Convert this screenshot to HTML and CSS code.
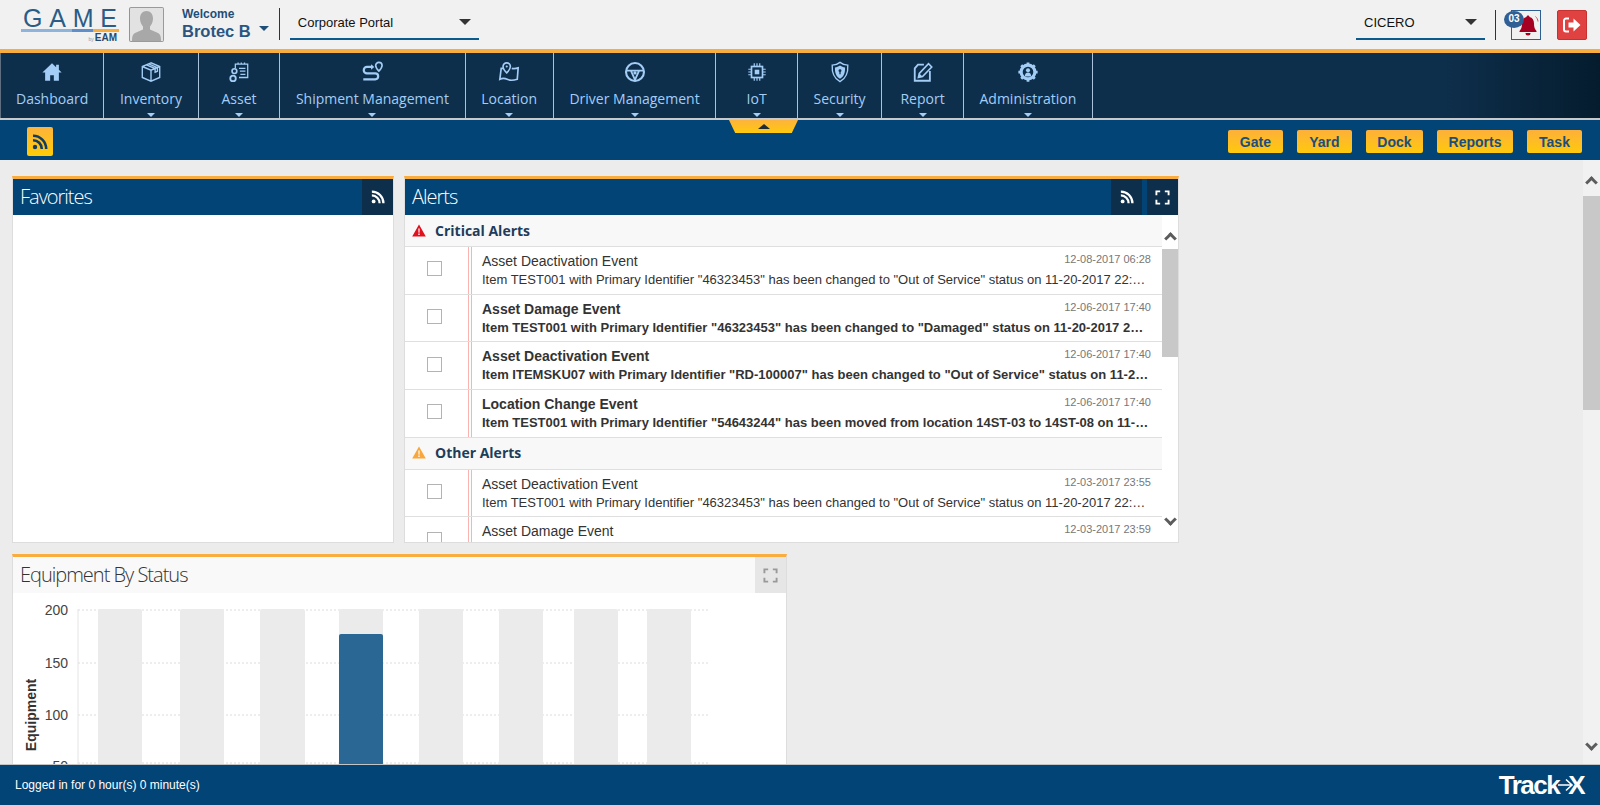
FILE: index.html
```html
<!DOCTYPE html>
<html lang="en">
<head>
  <meta charset="UTF-8">
  <title>GAME EAM - Corporate Portal</title>
  <link rel="stylesheet" href="styles.css">
</head>
<body>

<svg class="defs" width="0" height="0">
  <symbol id="i-rss" viewBox="0 0 16 16">
    <circle cx="3" cy="13" r="2.2" fill="currentColor"/>
    <path d="M1 6.2a8.8 8.8 0 0 1 8.8 8.8M1 1.8A13.2 13.2 0 0 1 14.2 15" fill="none" stroke="currentColor" stroke-width="2.6"/>
  </symbol>
  <symbol id="i-expand" viewBox="0 0 16 16">
    <path d="M1.5 5.5v-4h4M10.500 1.500h4v4M14.500 10.500v4h-4M5.500 14.500h-4v-4" fill="none" stroke="currentColor" stroke-width="2"/>
  </symbol>
  <symbol id="i-warn" viewBox="0 0 14 13">
    <path d="M7 .5 13.800 12.500H.2Z" fill="currentColor"/>
    <path d="M6.300 4.500h1.400l-.2 4.300h-1zM6.300 9.600h1.400v1.400H6.300z" fill="#fff"/>
  </symbol>
</svg>

<header class="topbar">
  <div class="logo">
    <span class="logo-name">GAME</span>
    <span class="logo-line"></span>
    <span class="logo-sub"><small>by</small>EAM</span>
  </div>
  <div class="avatar">
    <svg width="33" height="33" viewBox="0 0 33 33"><path d="M16.500 3c4 0 6.500 3 6.500 7.500 0 3.500-1.500 6.500-3 8v3l8 3.500c2 1 3 3 3 8H2c0-5 1-7 3-8l8-3.500v-3c-1.500-1.500-3-4.500-3-8C10 6 12.500 3 16.500 3Z" fill="#a8a8a8"/></svg>
  </div>
  <div class="welcome">
    <span class="welcome-label">Welcome</span>
    <span class="welcome-name">Brotec B</span>
  </div>
  <span class="caret caret-blue"></span>
  <span class="vline"></span>
  <div class="select select-portal">Corporate Portal<span class="caret caret-dark"></span></div>
  <div class="topbar-right">
    <div class="select select-site">CICERO<span class="caret caret-dark"></span></div>
    <span class="vline vline-right"></span>
    <div class="bell">
      <span class="badge">03</span>
      <svg width="24" height="24" viewBox="0 0 24 24"><path d="M12 2.500c.9 0 1.500.6 1.500 1.400 3 .7 4.500 3.300 4.500 6.500 0 4 .8 5.500 2.500 7.600v1H3.500v-1C5.200 15.900 6 14.400 6 10.400c0-3.200 1.500-5.800 4.500-6.500 0-.8.600-1.400 1.500-1.400ZM9.500 20h5a2.500 2.500 0 0 1-5 0Z" fill="#a50021"/><path d="M19.500 3.500c1.500 1.300 2.300 3 2.500 5" fill="none" stroke="#d9534f" stroke-width="1"/></svg>
    </div>
    <button class="logout">
      <svg width="20" height="18" viewBox="0 0 20 18"><path d="M7 2.500H4a2 2 0 0 0-2 2v9a2 2 0 0 0 2 2h3" fill="none" stroke="#fff" stroke-width="2"/><path d="M6.500 6.500h5V2.500L18.500 9l-7 6.500v-4h-5Z" fill="#fff"/></svg>
    </button>
  </div>
</header>

<nav class="mainnav">
  <a class="nav-item nav-first">
    <svg class="nav-icon" viewBox="0 0 24 24"><path d="M12 2.500 1.500 12.500h3v9h5.500v-6h4v6h5.500v-9h3l-3-3V4h-3v2.700Z" fill="currentColor"/></svg>
    <span>Dashboard</span>
  </a>
  <a class="nav-item has-sub">
    <svg class="nav-icon" viewBox="0 0 24 24"><path d="M12 2 2.500 6v12l9.500 4 9.500-4V6ZM2.500 6l9.500 4 9.500-4M12 10v12M7 4.200l9.500 4v4l2.500-1V7.200L9.500 3.200" fill="none" stroke="currentColor" stroke-width="1.500"/></svg>
    <span>Inventory</span>
  </a>
  <a class="nav-item has-sub">
    <svg class="nav-icon" viewBox="0 0 24 24"><path d="M8 8V3.500h13.500V18H12M11 3.500V1.500M14.500 3.500V1.500M18 3.500V1.500M12 8h7M13 11h6M13.500 14.500h5.500" fill="none" stroke="currentColor" stroke-width="1.400"/><circle cx="7" cy="11" r="2.600" fill="none" stroke="currentColor" stroke-width="1.800"/><circle cx="5.500" cy="19" r="3" fill="none" stroke="currentColor" stroke-width="2"/></svg>
    <span>Asset</span>
  </a>
  <a class="nav-item has-sub">
    <svg class="nav-icon" viewBox="0 0 24 24"><path d="M13 6.500H6.500a3 3 0 0 0 0 7h9a3 3 0 0 1 0 6.500H2.500" fill="none" stroke="currentColor" stroke-width="2.400"/><path d="M11 3.500l3.500 3-3.500 3Z" fill="currentColor"/><path d="M19.500 1.500a3.500 3.500 0 0 1 3.500 3.500c0 2.500-3.500 6-3.500 6S16 7.500 16 5a3.500 3.500 0 0 1 3.500-3.500Z" fill="none" stroke="currentColor" stroke-width="1.800"/></svg>
    <span>Shipment Management</span>
  </a>
  <a class="nav-item has-sub">
    <svg class="nav-icon" viewBox="0 0 24 24"><path d="M5.500 8H3.500L2 20c3-1.500 5-1.500 8 0 3 1.500 6 1.500 11 0l1-12.500c-3 1-5 1-7 .5" fill="none" stroke="currentColor" stroke-width="1.800"/><path d="M9.500 2A4 4 0 0 1 13.500 6c0 3-4 7-4 7s-4-4-4-7a4 4 0 0 1 4-4Z" fill="none" stroke="currentColor" stroke-width="1.800"/><circle cx="9.500" cy="6" r="1.200" fill="currentColor"/></svg>
    <span>Location</span>
  </a>
  <a class="nav-item has-sub">
    <svg class="nav-icon" viewBox="0 0 24 24"><circle cx="12" cy="12" r="9.800" fill="none" stroke="currentColor" stroke-width="2.300"/><path d="M3 10.500h18M7.500 10.500l4.500 10 4.500-10" fill="none" stroke="currentColor" stroke-width="2"/><circle cx="12" cy="13" r="1.800" fill="currentColor"/></svg>
    <span>Driver Management</span>
  </a>
  <a class="nav-item has-sub">
    <svg class="nav-icon" viewBox="0 0 24 24"><rect x="6" y="6" width="12" height="12" fill="none" stroke="currentColor" stroke-width="1.800"/><rect x="9.500" y="9.500" width="5" height="5" fill="currentColor"/><path d="M9 2.500v3M12 2.500v3M15 2.500v3M9 18.500v3M12 18.500v3M15 18.500v3M2.500 9h3M2.500 12h3M2.500 15h3M18.500 9h3M18.500 12h3M18.500 15h3" stroke="currentColor" stroke-width="1.300"/></svg>
    <span>IoT</span>
  </a>
  <a class="nav-item has-sub">
    <svg class="nav-icon" viewBox="0 0 24 24"><path d="M12 1.500c2.500 2 5 3 8.500 3 .5 8-1 14-8.500 18-7.500-4-9-10-8.500-18 3.500 0 6-1 8.500-3Z" fill="none" stroke="currentColor" stroke-width="1.500"/><path d="M12 5c2 1.200 3.500 2 5.500 2 .2 5.500-1 9.500-5.500 12.300C7.500 16.500 6.300 12.500 6.500 7c2 0 3.500-.8 5.500-2Z" fill="currentColor"/><circle cx="12" cy="10.500" r="1.600" fill="#0e2f4c"/><path d="M11.300 11.500h1.400v3h-1.400Z" fill="#0e2f4c"/></svg>
    <span>Security</span>
  </a>
  <a class="nav-item has-sub">
    <svg class="nav-icon" viewBox="0 0 24 24"><path d="M13 4H6.500L3 8v13.500h16.500V11" fill="none" stroke="currentColor" stroke-width="2"/><path d="M7 18l1-4.500L18 3l3.500 3.500L11.500 17Z" fill="none" stroke="currentColor" stroke-width="1.800"/><path d="M7 18l1-4.500 3.500 3.500Z" fill="currentColor"/></svg>
    <span>Report</span>
  </a>
  <a class="nav-item has-sub">
    <svg class="nav-icon" viewBox="0 0 24 24"><circle cx="12" cy="12" r="7.500" fill="none" stroke="currentColor" stroke-width="3.400"/><path d="M12 1.500v4M12 18.500v4M1.500 12h4M18.500 12h4M4.600 4.600l2.800 2.800M16.600 16.600l2.800 2.800M19.400 4.600l-2.800 2.800M7.400 16.600l-2.800 2.800" stroke="currentColor" stroke-width="3"/><circle cx="12" cy="10" r="2.200" fill="currentColor"/><path d="M8.500 17c0-3 1.500-4.500 3.500-4.500s3.500 1.500 3.500 4.500Z" fill="currentColor"/></svg>
    <span>Administration</span>
  </a>
</nav>

<div class="subbar">
  <button class="feed-btn"><svg width="16" height="16"><use href="#i-rss"/></svg></button>
  <div class="subbar-tag"><span class="tag-arrow"></span></div>
  <div class="quick-links">
    <button class="quick-btn">Gate</button>
    <button class="quick-btn">Yard</button>
    <button class="quick-btn">Dock</button>
    <button class="quick-btn">Reports</button>
    <button class="quick-btn">Task</button>
  </div>
</div>

<div class="workspace">
  <main class="dash">
    <div class="dash-row">
      <section class="panel panel-fav">
        <div class="panel-head">
          <h3>Favorites</h3>
          <button class="head-btn"><svg width="14" height="14"><use href="#i-rss"/></svg></button>
        </div>
      </section>

      <section class="panel panel-alerts">
        <div class="panel-head">
          <h3>Alerts</h3>
          <button class="head-btn"><svg width="14" height="14"><use href="#i-rss"/></svg></button>
          <button class="head-btn head-btn-gap"><svg width="15" height="15"><use href="#i-expand"/></svg></button>
        </div>
        <div class="alerts-body">
          <div class="alert-list">
            <div class="alert-section"><svg class="warn warn-red" width="14" height="13"><use href="#i-warn"/></svg>Critical Alerts</div>

            <div class="alert-row">
              <div class="check-cell"><span class="check"></span></div>
              <span class="row-mark"></span>
              <div class="alert-text">
                <div class="alert-top"><span class="alert-title">Asset Deactivation Event</span><span class="alert-date">12-08-2017 06:28</span></div>
                <div class="alert-desc">Item TEST001 with Primary Identifier "46323453" has been changed to "Out of Service" status on 11-20-2017 22:…</div>
              </div>
            </div>
            <div class="alert-row unread">
              <div class="check-cell"><span class="check"></span></div>
              <span class="row-mark"></span>
              <div class="alert-text">
                <div class="alert-top"><span class="alert-title">Asset Damage Event</span><span class="alert-date">12-06-2017 17:40</span></div>
                <div class="alert-desc">Item TEST001 with Primary Identifier "46323453" has been changed to "Damaged" status on 11-20-2017 2…</div>
              </div>
            </div>
            <div class="alert-row unread">
              <div class="check-cell"><span class="check"></span></div>
              <span class="row-mark"></span>
              <div class="alert-text">
                <div class="alert-top"><span class="alert-title">Asset Deactivation Event</span><span class="alert-date">12-06-2017 17:40</span></div>
                <div class="alert-desc">Item ITEMSKU07 with Primary Identifier "RD-100007" has been changed to "Out of Service" status on 11-2…</div>
              </div>
            </div>
            <div class="alert-row unread">
              <div class="check-cell"><span class="check"></span></div>
              <span class="row-mark"></span>
              <div class="alert-text">
                <div class="alert-top"><span class="alert-title">Location Change Event</span><span class="alert-date">12-06-2017 17:40</span></div>
                <div class="alert-desc">Item TEST001 with Primary Identifier "54643244" has been moved from location 14ST-03 to 14ST-08 on 11-…</div>
              </div>
            </div>

            <div class="alert-section"><svg class="warn warn-orange" width="14" height="13"><use href="#i-warn"/></svg>Other Alerts</div>

            <div class="alert-row">
              <div class="check-cell"><span class="check"></span></div>
              <span class="row-mark"></span>
              <div class="alert-text">
                <div class="alert-top"><span class="alert-title">Asset Deactivation Event</span><span class="alert-date">12-03-2017 23:55</span></div>
                <div class="alert-desc">Item TEST001 with Primary Identifier "46323453" has been changed to "Out of Service" status on 11-20-2017 22:…</div>
              </div>
            </div>
            <div class="alert-row alert-row-last">
              <div class="check-cell"><span class="check"></span></div>
              <span class="row-mark"></span>
              <div class="alert-text">
                <div class="alert-top"><span class="alert-title">Asset Damage Event</span><span class="alert-date">12-03-2017 23:59</span></div>
              </div>
            </div>
          </div>
          <div class="scrollbar scrollbar-list">
            <span class="chev chev-up"></span>
            <span class="thumb thumb-list"></span>
            <span class="chev chev-down"></span>
          </div>
        </div>
      </section>
    </div>

    <section class="panel panel-equip">
      <div class="panel-head panel-head-light">
        <h3>Equipment By Status</h3>
        <button class="head-btn head-btn-light"><svg width="15" height="15"><use href="#i-expand"/></svg></button>
      </div>
      <svg class="chart" width="773" height="172" viewBox="0 0 773 172">
        <path class="grid" d="M65 17H696M65 70H696M65 122H696M65 170H696"/>
        <g class="bars-bg">
          <rect x="85" y="16" width="44" height="156" rx="2"/>
          <rect x="167" y="16" width="44" height="156" rx="2"/>
          <rect x="247" y="16" width="45" height="156" rx="2"/>
          <rect x="326" y="16" width="44" height="156" rx="2"/>
          <rect x="406" y="16" width="44" height="156" rx="2"/>
          <rect x="486" y="16" width="44" height="156" rx="2"/>
          <rect x="561" y="16" width="44" height="156" rx="2"/>
          <rect x="634" y="16" width="44" height="156" rx="2"/>
        </g>
        <rect class="bar-value" x="326" y="41" width="44" height="131" rx="2"/>
        <path class="axis" d="M65 16V172"/>
        <g class="ticks">
          <text x="55" y="22">200</text>
          <text x="55" y="75">150</text>
          <text x="55" y="127">100</text>
          <text x="55" y="178">50</text>
        </g>
        <text class="axis-title" transform="translate(23 122) rotate(-90)" text-anchor="middle">Equipment</text>
      </svg>
    </section>
  </main>

  <div class="scrollbar scrollbar-page">
    <span class="chev chev-up"></span>
    <span class="thumb thumb-page"></span>
    <span class="chev chev-down"></span>
  </div>
</div>

<footer class="footer">
  <span>Logged in for 0 hour(s) 0 minute(s)</span>
  <div class="brand">Track<svg class="brand-arrow" width="16" height="14" viewBox="0 0 16 14"><path d="M0 7h13M8 1.500 14 7l-6 5.500" fill="none" stroke="#fff" stroke-width="1.600"/></svg>X</div>
</footer>

</body>
</html>
```

FILE: styles.css
```css
* {
  box-sizing: border-box;
}
html, body {
  height: 100%;
}
body {
  margin: 0;
  display: flex;
  flex-direction: column;
  overflow: hidden;
  font-family: "Liberation Sans", Arial, sans-serif;
  background: #ececec;
  color: #333;
}
button {
  font-family: inherit;
  border: 0;
  padding: 0;
}
.defs {
  position: absolute;
}

/* top bar */
.topbar {
  flex: none;
  height: 49px;
  display: flex;
  align-items: flex-start;
  padding-left: 21px;
  background: #f1f1f1;
}
.logo {
  width: 98px;
  margin-top: 6px;
  display: flex;
  flex-direction: column;
}
.logo-name {
  font-size: 25px;
  line-height: 23px;
  letter-spacing: 6.800px;
  color: #2a5c88;
  padding: 1px 0 0 2px;
  margin-bottom: -1px;
  white-space: nowrap;
}
.logo-line {
  height: 3px;
  background: linear-gradient(90deg, #8fb4dc 0, #8fb4dc 52%, #5f8fcb 52%, #5f8fcb 73%, #f7ad3d 73%, #f7ad3d 100%);
}
.logo-sub {
  font-size: 10px;
  line-height: 10px;
  margin-top: 1px;
  padding-right: 2px;
  font-weight: bold;
  text-align: right;
  color: #27496b;
}
.logo-sub small {
  font-size: 5px;
  font-weight: normal;
  color: #8a9bab;
  margin-right: 1px;
}
.avatar {
  width: 35px;
  height: 35px;
  margin: 7px 0 0 10px;
  border: 1px solid #7f9fc4;
  border-left-color: #7da85f;
  border-radius: 2px;
  background: #e2e2e2;
  overflow: hidden;
}
.avatar svg {
  display: block;
}
.welcome {
  margin: 7px 0 0 18px;
  display: flex;
  flex-direction: column;
  font-weight: bold;
  color: #2a5583;
}
.welcome-label {
  font-size: 12px;
  line-height: 14px;
  color: #1f4e79;
}
.welcome-name {
  font-size: 16.500px;
  line-height: 20px;
}
.caret {
  width: 0;
  height: 0;
  border-style: solid;
  border-color: transparent;
  border-bottom-width: 0;
}
.caret-blue {
  margin: 26px 0 0 8px;
  border-width: 5px 5px 0;
  border-top-color: #1f4e79;
}
.caret-dark {
  border-width: 6px 6px 0;
  border-top-color: #333;
}
.vline {
  width: 1px;
  height: 32px;
  margin: 8px 0 0 10px;
  background: #333;
}
.select {
  height: 32px;
  margin-top: 8px;
  padding: 0 8px;
  display: flex;
  align-items: center;
  justify-content: space-between;
  font-size: 13px;
  color: #111;
  border-bottom: 2px solid #0b5a8c;
  padding-bottom: 2px;
}
.select-portal {
  width: 189px;
  margin-left: 10px;
}
.select-site {
  width: 129px;
}
.topbar-right {
  margin-left: auto;
  display: flex;
  align-items: flex-start;
  padding-right: 13px;
}
.vline-right {
  height: 30px;
  margin: 10px 0 0 10px;
}
.bell {
  position: relative;
  width: 30px;
  height: 30px;
  margin: 10px 0 0 15px;
  border: 1px solid #2d5f93;
  display: flex;
  align-items: center;
  justify-content: center;
  padding-left: 3px;
}
.badge {
  position: absolute;
  left: -8px;
  top: 0;
  width: 20px;
  height: 17px;
  border-radius: 50%;
  background: #2f5f93;
  color: #fff;
  font-size: 10px;
  line-height: 16px;
  font-weight: bold;
  text-align: center;
}
.logout {
  width: 30px;
  height: 30px;
  margin: 10px 0 0 16px;
  display: flex;
  align-items: center;
  justify-content: center;
  background: #e04141;
  border: 1px solid #c93030;
  border-radius: 2px;
}

/* main navigation */
.mainnav {
  flex: none;
  height: 71px;
  display: flex;
  border-top: 4px solid #f9ad3f;
  border-bottom: 2px solid #c9c9c9;
  background: linear-gradient(90deg, #0e2f4c 0, #0e2f4c 90%, #051c2e 100%);
}
.nav-item {
  position: relative;
  min-width: 81.500px;
  padding: 4px 15.700px 0;
  display: flex;
  flex-direction: column;
  align-items: center;
  border-right: 1px solid #a9c3dc;
  font-family: "Open Sans", sans-serif;
  font-size: 14px;
  line-height: 20px;
  color: #a3cdf5;
}
.nav-first {
  border-left: 1px solid #5d6f80;
  padding: 4px 15px 0;
}
.nav-icon {
  width: 22px;
  height: 22px;
  margin-top: 4px;
  margin-bottom: 6px;
}
.has-sub::after {
  content: "";
  position: absolute;
  left: 50%;
  bottom: 1px;
  margin-left: -4px;
  border-style: solid;
  border-color: #a3cdf5 transparent transparent;
  border-width: 4px 4px 0;
}

/* strip under nav */
.subbar {
  flex: none;
  position: relative;
  height: 40px;
  display: flex;
  align-items: center;
  padding: 0 18px 0 27px;
  background: #024476;
}
.feed-btn {
  width: 26px;
  height: 29px;
  margin-top: 3px;
  display: flex;
  align-items: center;
  justify-content: center;
  color: #0f3d66;
  border-radius: 2px;
  background: linear-gradient(#fdb33d, #ffcc05);
}
.subbar-tag {
  position: absolute;
  left: 729px;
  top: 0;
  width: 69px;
  height: 13px;
  clip-path: polygon(0 0, 100% 0, 91% 100%, 9% 100%);
  background: linear-gradient(#fdb33d, #ffc90c);
  display: flex;
  justify-content: center;
  align-items: center;
}
.tag-arrow {
  border-style: solid;
  border-color: transparent transparent #1b2b3a;
  border-width: 0 6px 5px;
}
.quick-links {
  margin-left: auto;
  margin-top: 3px;
  display: flex;
  gap: 14px;
}
.quick-btn {
  min-width: 55px;
  height: 23px;
  padding: 0 11.500px;
  font-size: 14px;
  font-weight: bold;
  color: #1c4e7c;
  border-radius: 2px;
  background: linear-gradient(#fdb03a, #ffc90c);
}

/* dashboard */
.workspace {
  flex: 1;
  min-height: 0;
  display: flex;
}
.dash {
  flex: 1;
  min-width: 0;
  overflow: hidden;
  padding: 16px 0 0 12px;
}
.dash-row {
  display: flex;
  gap: 10px;
  height: 367px;
  margin-bottom: 11px;
}
.panel {
  display: flex;
  flex-direction: column;
  background: #fff;
  border: 1px solid #ddd;
  border-top: 3px solid #f9ad3f;
}
.panel-fav {
  width: 382px;
}
.panel-alerts {
  width: 775px;
}
.panel-equip {
  width: 775px;
}
.panel-head {
  flex: none;
  height: 36px;
  display: flex;
  justify-content: flex-end;
  background: #024476;
  color: #fff;
}
.panel-head h3 {
  margin: 0 auto 0 7px;
  font-family: "Open Sans", sans-serif;
  font-size: 20px;
  line-height: 36px;
  font-weight: 300;
  letter-spacing: -1px;
}
.panel-head-light {
  background: #f9f9f9;
  color: #333;
}
.head-btn {
  width: 31px;
  display: flex;
  align-items: center;
  justify-content: center;
  color: #fff;
  background: #0e2f4c;
}
.head-btn-gap {
  margin-left: 5px;
}
.head-btn-light {
  color: #999;
  background: #e6e6e6;
}

/* alerts list */
.alerts-body {
  flex: 1;
  min-height: 0;
  display: flex;
}
.alert-list {
  flex: 1;
  min-width: 0;
  overflow: hidden;
}
.alert-section {
  height: 32px;
  display: flex;
  align-items: center;
  gap: 9px;
  padding: 0 0 1px 7px;
  font-family: "Open Sans", sans-serif;
  font-size: 14px;
  font-weight: 700;
  color: #1e3d5a;
  background: #f8f8f8;
  border-bottom: 1px solid #dfdfdf;
}
.warn-red {
  color: #e0101e;
}
.warn-orange {
  color: #f9a63a;
}
.alert-row {
  height: 47.700px;
  display: flex;
  border-bottom: 1px solid #dfdfdf;
}
.alert-row-last {
  border-bottom: 0;
}
.check-cell {
  flex: none;
  width: 63px;
  display: flex;
  align-items: center;
  justify-content: center;
  padding: 0 5px 3px 0;
}
.check {
  width: 15px;
  height: 15px;
  border: 1px solid #b3b3b3;
  background: #fff;
}
.row-mark {
  flex: none;
  width: 4px;
  border-left: 1px solid #fbb3b0;
  border-right: 1px solid #fbb3b0;
}
.alert-text {
  flex: 1;
  min-width: 0;
  padding: 6px 11px 0 10px;
}
.alert-top {
  display: flex;
  justify-content: space-between;
  line-height: 16px;
}
.alert-title {
  font-size: 14px;
}
.alert-date {
  font-size: 11px;
  line-height: 13px;
  color: #777;
}
.alert-desc {
  margin-top: 3px;
  font-size: 13px;
  line-height: 16px;
  white-space: nowrap;
  overflow: hidden;
}
.unread .alert-title,
.unread .alert-desc {
  font-weight: bold;
}

/* scrollbars */
.scrollbar {
  flex: none;
  width: 17px;
  display: flex;
  flex-direction: column;
  align-items: center;
  background: #f1f1f1;
}
.scrollbar-list {
  width: 16px;
  background: #fff;
  padding-top: 19px;
}
.scrollbar-page {
  padding-top: 18px;
}
.thumb {
  width: 100%;
  background: #c8c8c8;
}
.thumb-list {
  height: 108px;
  margin-top: 6px;
}
.thumb-page {
  height: 214px;
  margin-top: 9px;
}
.chev {
  width: 9px;
  height: 9px;
  flex: none;
  border: solid #5c5c5c;
  border-width: 3px 0 0 3px;
}
.chev-up {
  transform: rotate(45deg);
}
.chev-down {
  transform: rotate(225deg);
  margin-top: auto;
  margin-bottom: 15px;
}
.scrollbar-list .chev-down {
  margin-bottom: 18px;
}

/* chart */
.chart {
  display: block;
  flex: none;
}
.bars-bg rect {
  fill: #ebebeb;
}
.bar-value {
  fill: #2a6795;
}
.grid {
  stroke: #dcdcdc;
  stroke-dasharray: 2 2;
  fill: none;
}
.axis {
  stroke: #e4e4e4;
  fill: none;
}
.ticks text {
  font-size: 14px;
  fill: #444;
  text-anchor: end;
}
.axis-title {
  font-size: 14px;
  font-weight: bold;
  fill: #333;
}

/* footer */
.footer {
  flex: none;
  height: 41px;
  display: flex;
  align-items: center;
  justify-content: space-between;
  padding: 0 16px 0 15px;
  background: #024476;
  border-top: 1px solid #c4c4c4;
  color: #fff;
  font-size: 12px;
}
.brand {
  display: flex;
  align-items: center;
  font-size: 26px;
  font-weight: bold;
  letter-spacing: -1.500px;
}
.brand-arrow {
  margin: 0 -6px 0 -1px;
}
```
